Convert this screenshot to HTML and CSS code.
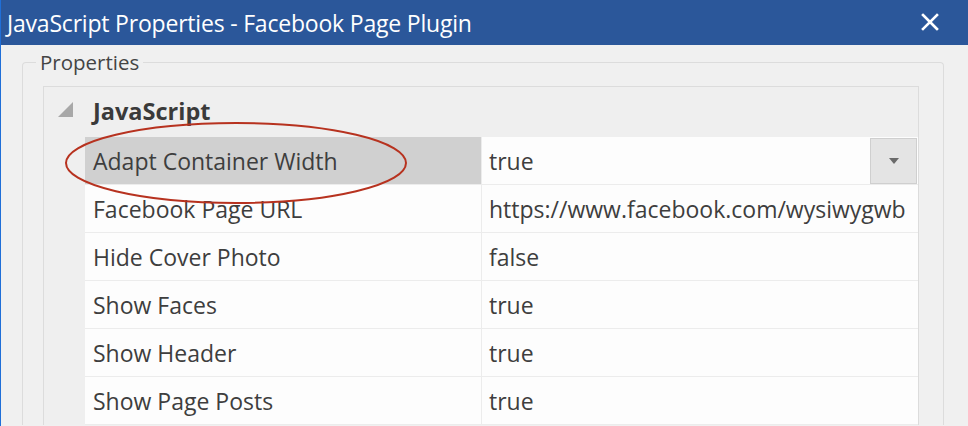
FILE: index.html
```html
<!DOCTYPE html>
<html lang="en">
<head>
  <meta charset="UTF-8" />
  <title>JavaScript Properties - Facebook Page Plugin</title>
  <link rel="stylesheet" href="styles.css">
</head>
<body>

  <!-- Dialog title bar -->
  <div class="titlebar">
    <span class="title">JavaScript Properties - Facebook Page Plugin</span>
    <svg class="close" width="18" height="18" viewBox="0 0 18 18">
      <path d="M2 2 L16 16 M16 2 L2 16" stroke="#fff" stroke-width="2.6" stroke-linecap="square" />
    </svg>
  </div>

  <!-- Dialog body -->
  <div class="content">
    <fieldset class="group">
      <legend>Properties</legend>

      <div class="grid">
        <div class="category">
          <span class="toggle"></span>
          <span class="category-name">JavaScript</span>
        </div>

        <div class="row selected">
          <div class="name">Adapt Container Width</div>
          <div class="value">
            <span>true</span>
            <span class="drop-btn"><span class="arrow"></span></span>
          </div>
        </div>
        <div class="row">
          <div class="name">Facebook Page URL</div>
          <div class="value">https://www.facebook.com/wysiwygwb</div>
        </div>
        <div class="row">
          <div class="name">Hide Cover Photo</div>
          <div class="value">false</div>
        </div>
        <div class="row">
          <div class="name">Show Faces</div>
          <div class="value">true</div>
        </div>
        <div class="row">
          <div class="name">Show Header</div>
          <div class="value">true</div>
        </div>
        <div class="row">
          <div class="name">Show Page Posts</div>
          <div class="value">true</div>
        </div>
      </div>
    </fieldset>

    <!-- red annotation around the selected property -->
    <svg class="highlight" width="346" height="88" viewBox="0 0 346 88">
      <ellipse cx="173" cy="44" rx="170" ry="40" fill="none" stroke="#b7321f" stroke-width="2" />
    </svg>
  </div>

</body>
</html>
```

FILE: styles.css
```css
:root {
  --title-bg: #2b579a;
  --dialog-bg: #f0f0f0;
  --panel-bg: #efefef;
  --row-bg: #fdfdfd;
  --line: #dcdcdc;
  --text-main: #3e3e3e;
}

html, body {
  height: 100%;
}

body {
  margin: 0;
  font-family: "Open Sans", "Noto Sans", sans-serif;
  background-color: var(--dialog-bg);
  color: var(--text-main);
  border-left: 1px solid #1f6fd8;
  overflow: hidden;
}

.titlebar {
  height: 45px;
  background-color: var(--title-bg);
  display: flex;
  align-items: center;
  justify-content: space-between;
  padding: 0 29px 0 6px;
}

.title {
  color: #fff;
  font-size: 23px;
  letter-spacing: -0.2px;
}

.close {
  display: block;
  margin-top: -2px;
}

.content {
  position: relative;
  padding: 3px 24px 0 21px;
}

.group {
  margin: 0;
  padding: 10px 24px 0 20px;
  border: 1px solid var(--line);
  border-bottom: none;
  border-radius: 4px 4px 0 0;
}

.group legend {
  font-size: 20.5px;
  line-height: 28px;
  color: #444;
  padding: 0 4px;
  margin-left: -7px;
}

.grid {
  background-color: var(--panel-bg);
  border: 1px solid var(--line);
  border-bottom: none;
}

.category {
  height: 50px;
  display: flex;
  align-items: center;
}

.toggle {
  width: 0;
  height: 0;
  border-left: 15px solid transparent;
  border-bottom: 15px solid #a8a8a8;
  margin: 0 20px 0 14px;
  position: relative;
  top: -3px;
}

.category-name {
  font-size: 23.5px;
  font-weight: bold;
  color: #3a3a3a;
  position: relative;
  top: -1px;
}

.row {
  display: flex;
  height: 47px;
  margin-left: 41px;
  border-bottom: 1px solid #ececec;
  background-color: var(--row-bg);
  font-size: 23px;
}

.name {
  width: 388px;
  padding-left: 8px;
  display: flex;
  align-items: center;
  border-right: 1px solid #ececec;
}

.value {
  flex: 1;
  padding-left: 7px;
  display: flex;
  align-items: center;
  justify-content: space-between;
  white-space: nowrap;
}

.selected .name {
  background-color: #d0d0d0;
}

.drop-btn {
  width: 45px;
  height: 44px;
  margin-right: 1px;
  background-color: #e4e4e4;
  border: 1px solid #cfcfcf;
  display: flex;
  align-items: center;
  justify-content: center;
}

.arrow {
  width: 0;
  height: 0;
  border-left: 5px solid transparent;
  border-right: 5px solid transparent;
  border-top: 6px solid #6a6a6a;
}

.highlight {
  position: absolute;
  left: 62px;
  top: 74px;
}
```
